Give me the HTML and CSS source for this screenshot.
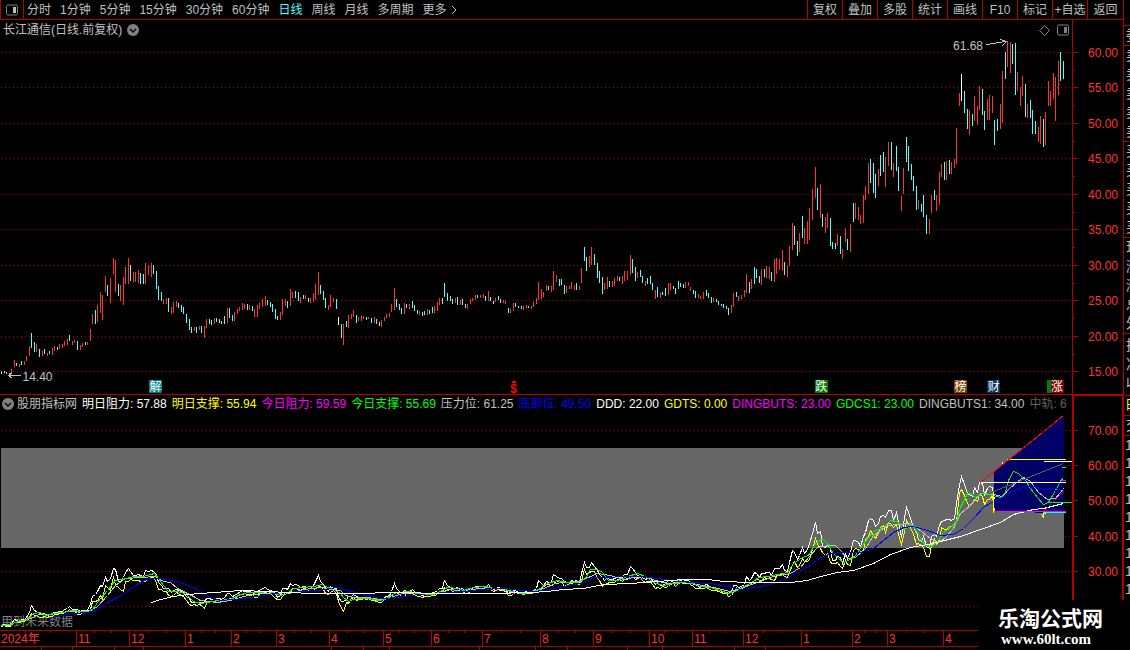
FILE: index.html
```
<!DOCTYPE html>
<html lang="zh-CN">

<head>
    <meta charset="UTF-8" />
    <title>长江通信 日线</title>
    <link rel="stylesheet" href="styles.css">
</head>

<body>
    <div class="terminal">
        <div class="main">
            <header class="toolbar">
                <button class="layout-btn" aria-label="布局">
                    <svg width="12" height="12" viewBox="0 0 12 12">
                        <rect x="0.5" y="1" width="11" height="10" rx="1.5" fill="none" stroke="#808080" />
                        <rect x="7" y="3" width="3" height="6" fill="#c0c0c0" />
                    </svg>
                </button>
                <nav class="periods">
                    <button>分时</button>
                    <button>1分钟</button>
                    <button>5分钟</button>
                    <button>15分钟</button>
                    <button>30分钟</button>
                    <button>60分钟</button>
                    <button class="active">日线</button>
                    <button>周线</button>
                    <button>月线</button>
                    <button>多周期</button>
                    <button class="more">更多
                        <svg width="6" height="10" viewBox="0 0 6 10">
                            <path d="M1 1l4 4-4 4" fill="none" stroke="#c0c0c0" />
                        </svg>
                    </button>
                </nav>
                <div class="tools">
                    <button>复权</button>
                    <button>叠加</button>
                    <button>多股</button>
                    <button>统计</button>
                    <button>画线</button>
                    <button>F10</button>
                    <button>标记</button>
                    <button>+自选</button>
                    <button>返回</button>
                </div>
            </header>

            <!-- Daily price -->
            <section class="panel price">
                <div class="panel-title">
                    <span>长江通信(日线.前复权)</span>
                    <svg class="drop" width="12" height="12" viewBox="0 0 12 12">
                        <circle cx="6" cy="6" r="6" fill="#808080" />
                        <path d="M3 5l3 3 3-3" fill="none" stroke="#000" stroke-width="1.4" />
                    </svg>
                    <div class="corner">
                        <svg width="11" height="11" viewBox="0 0 11 11">
                            <path d="M5.5 0.5l5 5-5 5-5-5z" fill="none" stroke="#808080" />
                        </svg>
                        <svg width="12" height="12" viewBox="0 0 12 12">
                            <rect x="0.5" y="1" width="11" height="10" rx="1.5" fill="none" stroke="#808080" />
                            <rect x="7" y="3" width="3" height="6" fill="#808080" />
                        </svg>
                    </div>
                </div>
                <div class="plot">
                    <svg viewBox="0 38 1072 356" preserveAspectRatio="none" shape-rendering="crispEdges">
                        <g transform="translate(.5 .5)">
                            <g id="priceGrid" class="grid"></g>
                            <path id="upBars" class="up" />
                            <path id="downBars" class="down" />
                            <path id="flatBars" class="flat" />
                            <path class="pointer" d="M986 44L1005 41M1000 39L1006 41L1001 46M8 375H20M12 372L8 375L12 378" />
                        </g>
                    </svg>
                    <span class="tag high">61.68</span>
                    <span class="tag low">14.40</span>
                    <span class="event jie">解</span>
                    <span class="event dividend">$</span>
                    <span class="event die">跌</span>
                    <span class="event bang">榜</span>
                    <span class="event cai">财</span>
                    <span class="event zhang-back"></span>
                    <span class="event zhang">涨</span>
                </div>
                <svg class="axis" id="priceAxis" width="50" height="374" viewBox="0 20 50 374"></svg>
            </section>

            <!-- Indicator -->
            <section class="panel indicator">
                <div class="panel-title values">
                    <svg class="drop" width="12" height="12" viewBox="0 0 12 12">
                        <circle cx="6" cy="6" r="6" fill="#808080" />
                        <path d="M3 5l3 3 3-3" fill="none" stroke="#000" stroke-width="1.4" />
                    </svg>
                    <span>股朋指标网</span>
                    <span class="c-white">明日阻力: 57.88</span>
                    <span class="c-yellow">明日支撑: 55.94</span>
                    <span class="c-magenta">今日阻力: 59.59</span>
                    <span class="c-green">今日支撑: 55.69</span>
                    <span>压力位: 61.25</span>
                    <span class="c-blue">底部位: 49.50</span>
                    <span class="c-white">DDD: 22.00</span>
                    <span class="c-yellow">GDTS: 0.00</span>
                    <span class="c-magenta">DINGBUTS: 23.00</span>
                    <span class="c-green">GDCS1: 23.00</span>
                    <span>DINGBUTS1: 34.00</span>
                    <span class="c-dim">中轨: 6</span>
                </div>
                <div class="plot">
                    <span class="notice">用到未来数据</span>
                    <svg viewBox="0 413 1072 217" preserveAspectRatio="none" shape-rendering="crispEdges">
                        <g transform="translate(.5 .5)">
                            <g id="indGrid" class="grid"></g>
                            <rect x="0.5" y="447.5" width="1063" height="100" fill="#666" />
                            <path d="M993.5 470.5L1063.5 414.5V511H993.5z" fill="#000066" />
                            <g class="lines">
                                <polyline id="support" class="s-yellow" />
                                <polyline id="resistance" class="s-white" />
                                <polyline class="s-gray" points="3,625 20,621 33,617 38,614 50,614 67,611 87,612 97,606 107,595 115,585 125,578 140,577 155,576 163,581 170,582 177,588 185,592 193,596 200,600 217,602 230,600 243,596 260,593 277,593 283,594 293,592 303,589 320,587 333,589 340,590 345,595 353,597 367,597 380,599 390,597 402,593 413,592 430,594 440,592 450,589 463,591 473,589 487,587 503,589 517,592 530,592 543,588 555,583 563,582 578,581 588,577 597,573 610,575 623,579 633,577 645,576 655,580 667,583 683,582 697,584 713,587 730,591 740,588 757,582 773,576 790,573 800,567 808,557 817,547 828,545 835,545 840,550 847,558 855,557 865,548 873,535 887,525 898,524 910,523 917,528 930,538 938,542 945,537 953,528 960,513 970,505 980,493 993,494 1002,496 1008,489 1017,481 1023,477 1030,481 1038,492 1047,499 1055,498 1060,492 1063,488" />
                                <polyline class="s-green" points="1,625 10,624 20,620 27,619 33,613 40,612 45,615 53,613 63,612 72,610 80,611 87,611 92,609 100,598 107,590 115,580 122,579 130,577 133,576 143,576 150,574 154,573 158,578 163,585 168,591 175,591 182,592 187,595 193,601 200,603 207,602 217,600 230,599 238,595 247,592 260,592 267,591 272,592 280,595 287,593 293,588 303,587 313,586 322,584 327,587 333,588 335,590 340,593 343,597 348,601 353,599 360,598 370,598 378,600 385,599 390,595 397,592 410,591 420,594 433,594 438,592 447,587 457,588 463,590 473,587 485,586 493,588 503,588 510,591 522,593 530,592 538,589 547,583 557,580 567,582 578,582 585,578 590,569 597,569 602,572 608,580 617,580 627,576 637,573 645,576 653,582 663,585 673,583 685,582 693,583 700,586 710,587 720,590 728,593 737,590 745,585 750,583 758,577 767,576 777,574 787,572 793,563 802,557 808,555 815,543 822,538 827,543 832,552 838,558 843,562 850,559 855,555 862,545 868,537 873,531 883,527 890,520 897,521 903,529 912,525 917,532 923,543 930,547 938,540 943,532 950,527 955,523 960,507 967,493 970,493 975,497 982,493 993,495 1000,497 1005,492 1008,480 1013,471 1018,473 1025,480 1030,488 1037,497 1043,504 1048,502 1055,490 1061,479 1063,478" />
                                <polyline class="s-blue" points="49,618 60,615 73,613 87,612 97,609 107,602 117,597 127,591 138,583 148,578 160,578 172,580 183,583 195,588 207,596 220,600 233,599 250,597 267,594 283,592 300,591 317,590 330,588 338,587 347,590 360,593 373,597 383,598 397,597 410,595 430,593 447,592 463,591 480,589 503,588 520,590 533,591 550,589 563,586 580,583 593,577 607,577 623,576 643,576 657,578 670,580 690,582 710,583 723,585 737,588 740,589 760,586 777,582 787,578 795,572 807,567 820,557 830,553 843,552 860,552 873,548 883,540 893,532 903,527 913,526 927,530 940,535 953,534 963,528 973,518 983,507 993,501 1003,497 1013,490 1023,487 1033,486 1043,489 1053,488 1063,489" />
                                <polyline class="s-white" points="151,602 160,599 173,596 187,594 200,593 227,591 240,590 267,591 287,592 313,593 340,593 410,592 430,593 487,593 530,592 547,591 563,589 583,588 603,584 630,583 657,581 683,579 707,579 723,581 750,582 790,582 807,580 820,576 837,572 853,570 873,563 890,554 910,547 927,544 940,541 960,536 980,529 1000,522 1013,514 1033,509 1043,508 1063,503" />
                                <!-- levels over the last weeks -->
                                <path class="s-dim" d="M993 491L1063 463" />
                                <path class="s-white" d="M979 482H1065M1043 461H1072M1002 461V463" />
                                <path class="s-yellow" d="M1006 459H1065M993 492V512M1041 514L1043 517V513L1045 513" />
                                <path class="s-green" d="M1061 467H1065M1048 502H1072" />
                                <path class="s-magenta" d="M1061 480H1065M993 511H1065" />
                                <path class="s-navy" d="M1034 512H1042" />
                                <path class="s-cyan" d="M1042 512H1065" />
                                <path class="s-red" d="M980 482L1063 415" />
                                <path class="s-red dashed" d="M1043 511L1063 491" />
                            </g>
                        </g>
                    </svg>
                </div>
                <svg class="axis" id="indAxis" width="48" height="234" viewBox="1 396 48 234"></svg>
            </section>

            <div class="dates">
                <span>2024年</span>
                <span>11</span>
                <span>12</span>
                <span>1</span>
                <span>2</span>
                <span>3</span>
                <span>4</span>
                <span>5</span>
                <span>6</span>
                <span>7</span>
                <span>8</span>
                <span>9</span>
                <span>10</span>
                <span>11</span>
                <span>12</span>
                <span>1</span>
                <span>2</span>
                <span>3</span>
                <span>4</span>
            </div>
            <footer class="tabs">
                <i></i><i></i><i></i><i></i><i></i><i></i><i></i><i></i><i></i><i></i><i></i><i></i><i></i><i></i><i></i>
            </footer>
        </div>

        <aside class="quote">
            <div class="group head"></div>
            <div class="group"><p>委比</p></div>
            <div class="group"><p>卖五</p><p>卖四</p><p>卖三</p><p>卖二</p><p>卖一</p></div>
            <div class="group"><p>买一</p><p>买二</p><p>买三</p><p>买四</p><p>买五</p></div>
            <div class="group"><p>现价</p><p>涨跌</p><p>涨幅</p><p>总量</p><p>外盘</p></div>
            <div class="group last"><p>换手</p><p>净资</p><p>收益</p></div>
            <div class="group c-yellow"><p>时间</p></div>
            <div class="group"><p>交易</p></div>
            <div class="ticks"><p>14:56</p><p>14:56</p><p>14:56</p><p>14:56</p><p>14:56</p><p>14:56</p><p>14:57</p><p>15:00</p><p>15:00</p></div>
        </aside>

        <div class="sitemark">
            <strong>乐淘公式网</strong>
            <a href="#">www.60lt.com</a>
        </div>
    </div>

    <script src="chart.js"></script>
</body>

</html>
```
FILE: styles.css
```
* {
    box-sizing: border-box;
}

body {
    margin: 0;
    background-color: #000;
    color: #c0c0c0;
    font-family: "Liberation Sans", "Noto Sans CJK SC", sans-serif;
    font-size: 12px;
    line-height: 18px;
}

button {
    background: none;
    border: 0;
    padding: 0;
    color: inherit;
    font: inherit;
    white-space: nowrap;
    cursor: pointer;
}

p {
    margin: 0;
}

.terminal {
    position: relative;
    display: flex;
}

.main {
    flex: 1;
    min-width: 0;
}

/* Toolbar */
.toolbar {
    display: flex;
    height: 20px;
    border-bottom: 1px solid #b00000;
}

.layout-btn {
    display: flex;
    align-items: center;
    justify-content: center;
    width: 24px;
    border-left: 1px solid #b00000;
    border-right: 1px solid #b00000;
}

.periods {
    display: flex;
    gap: 9px;
    padding-left: 3px;
}

.periods .active {
    color: #54ffff;
}

.more {
    display: flex;
    align-items: center;
    gap: 4px;
}

.tools {
    display: flex;
    margin-left: auto;
}

.tools button {
    width: 35px;
    border-left: 1px solid #b00000;
}

.tools button:last-child {
    width: 36px;
}

/* Chart panels */
.panel {
    display: grid;
    grid-template-columns: minmax(0, 1fr) auto;
    grid-template-rows: 18px auto;
}

.price {
    border-bottom: 1px solid #b00000;
}

.panel-title {
    display: flex;
    align-items: center;
    gap: 5px;
    padding-left: 3px;
    white-space: nowrap;
    overflow: hidden;
}

.price .panel-title {
    padding-top: 2px;
    line-height: 16px;
}

.panel-title svg {
    flex: none;
}

.values {
    padding-left: 2px;
}

.values .drop {
    margin-right: -2px;
}

.corner {
    display: flex;
    align-items: center;
    gap: 7px;
    margin-left: auto;
    padding-right: 3px;
}

.plot {
    position: relative;
    grid-column: 1;
}

.plot svg {
    display: block;
    position: relative;
    width: 100%;
}

.price .plot svg {
    height: 356px;
}

.indicator .plot svg {
    height: 217px;
}

.axis {
    display: block;
    box-sizing: content-box;
    grid-column: 2;
    grid-row: 1 / 3;
    border-left: 1px solid #b00000;
}

.indicator .axis {
    border-left-width: 2px;
    border-top: 1px solid #b00000;
    border-right: 1px solid #b00000;
}

.axis text {
    fill: #ff3232;
    text-anchor: end;
}

.axis path {
    stroke: #b00000;
}

.grid line {
    stroke: #b00000;
    stroke-dasharray: 1 3;
}

.up {
    stroke: #ff3232;
}

.down {
    stroke: #54ffff;
}

.flat {
    stroke: #fff;
}

.pointer {
    fill: none;
    stroke: #c0c0c0;
}

.lines {
    fill: none;
    stroke-width: 1;
}

.s-white { stroke: #fff; }
.s-yellow { stroke: #ff0; }
.s-gray { stroke: #c0c0c0; }
.s-green { stroke: #0f0; }
.s-blue { stroke: #00f; }
.s-dim { stroke: #606060; }
.s-magenta { stroke: #f0f; }
.s-navy { stroke: #000080; }
.s-cyan { stroke: #0ff; }
.s-red { stroke: #f00; }

.dashed {
    stroke-dasharray: 3 1;
}

.c-white { color: #fff; }
.c-yellow { color: #ff0; }
.c-magenta { color: #f0f; }
.c-green { color: #0f0; }
.c-blue { color: #00f; }
.c-dim { color: #606060; }

.notice {
    position: absolute;
    left: 1px;
    bottom: -1px;
    color: #808080;
}

/* Price tags and event marks pinned on the chart */
.tag,
.event {
    position: absolute;
}

.high {
    left: 88.9%;
    top: -1px;
}

.low {
    left: 2.1%;
    bottom: 8px;
}

.event {
    bottom: 1px;
    width: 13px;
    height: 13px;
    line-height: 14px;
    text-align: center;
    color: #fff;
}

.jie {
    left: 13.9%;
    background-color: #008080;
}

.dividend {
    left: 47.3%;
    bottom: -1px;
    color: #f00;
    font-weight: bold;
}

.dividend::before {
    content: "";
    position: absolute;
    left: 4px;
    top: -2px;
    border: 3px solid transparent;
    border-top-width: 0;
    border-bottom-color: #f00;
}

.die {
    left: 76%;
    background-color: #008000;
}

.bang {
    left: 89%;
    background-color: #804000;
}

.cai {
    left: 92.1%;
    background-color: #003366;
}

.zhang-back {
    left: 97.7%;
    background-color: #008000;
}

.zhang {
    left: 98%;
    background-color: #800000;
}

/* Month scale */
.dates {
    display: grid;
    grid-template-columns: 76fr 53fr 56fr 46fr 45fr 53fr 54fr 48fr 51fr 58fr 53fr 56fr 43fr 51fr 58fr 51fr 35fr 56fr 180fr;
    height: 17px;
    line-height: 16px;
    border-top: 1px solid #b00000;
    border-bottom: 1px solid #b00000;
    color: #ff3232;
}

.dates span {
    min-width: 0;
    padding-left: 1px;
    border-left: 1px solid #b00000;
    background: linear-gradient(#b00000, #b00000) 33% 0 / 1px 2px no-repeat,
        linear-gradient(#b00000, #b00000) 66% 0 / 1px 2px no-repeat;
}

.dates span:first-child {
    border-left: 0;
}

.tabs {
    display: grid;
    grid-template-columns: 42fr 31fr 42fr 29fr 188fr 32fr 26fr 90fr 56fr 32fr 60fr 35fr 72fr 31fr 357fr;
    height: 3px;
}

.tabs i {
    border-right: 1px solid #b00000;
}

/* Quote column */
.quote {
    flex: 0 0 7px;
    overflow: hidden;
    white-space: nowrap;
    border-left: 1px solid #b00000;
    font-size: 14px;
    line-height: 19px;
}

.group {
    padding-left: 2px;
    border-bottom: 1px solid #b00000;
}

.group.head {
    height: 26px;
}

.group.last {
    padding-top: 2px;
    padding-bottom: 2px;
}

.ticks {
    padding-left: 1px;
    line-height: 18px;
}

.sitemark {
    position: absolute;
    right: 0;
    bottom: 0;
    width: 152px;
    height: 50px;
    padding: 5px 0 0 20px;
    background-color: #000;
    color: #fff;
}

.sitemark strong {
    display: block;
    font-family: "Noto Sans CJK SC", sans-serif;
    font-size: 21px;
    line-height: 24px;
}

.sitemark a {
    display: block;
    padding-left: 3px;
    color: #fff;
    font: bold 15px/20px "Liberation Serif", serif;
    text-decoration: none;
}
```
FILE: chart.js
```
// one bar per day: direction (u up, d down, n flat), x, high, low
const days = `
d1,370,373 d4,370,372 d6,371,373 d9,372,374 u11,368,372 u14,359,366 d16,362,365 u19,363,366 d21,360,364 u24,360,364
u26,355,360 u29,345,355 d31,332,347 d34,341,351 u36,343,351 d39,348,356 u42,350,355 d44,348,353 u47,352,355 d49,350,353
u52,347,354 u54,345,350 d57,346,349 u59,343,348 u62,343,347 u64,340,345 u67,338,344 d69,334,340 u72,340,344 u74,339,342
d77,340,349 u80,344,349 u82,342,346 d85,341,344 u87,341,344 u90,328,340 u92,313,323 d95,309,323 u97,304,321 u100,291,312
u102,294,319 u105,275,291 d107,284,295 u110,277,302 u113,257,273 u115,259,291 d118,283,295 u120,284,300 u123,276,304
u125,266,283 u128,257,283 d130,264,280 u133,271,281 u135,271,281 u138,269,282 d140,272,283 d143,273,283 u145,262,283
u148,264,274 u151,262,276 d153,264,273 d156,270,288 d158,285,299 d161,291,300 u163,298,303 u166,297,303 d168,297,311
u171,306,313 u173,301,312 u176,300,306 d178,302,307 d181,304,311 d183,306,313 d186,313,322 d189,318,329 d191,326,332
u194,326,330 d196,326,332 u199,325,329 d201,325,332 u204,325,337 u206,318,327 d209,318,323 d211,319,324 u214,317,323
d216,317,321 d219,318,322 d221,320,323 d224,315,323 u227,307,322 d229,307,317 d232,314,320 u234,311,320 u237,308,313
u239,306,310 u242,302,309 u244,303,308 d247,303,309 u249,304,309 d252,305,310 u254,308,316 u257,304,316 u259,302,308
u262,298,306 u265,295,305 d267,299,304 d270,301,306 d272,303,311 d275,308,318 d277,315,319 u280,311,319 u282,298,314
u285,298,305 d287,300,307 u290,288,305 u292,291,297 d295,290,297 d298,291,300 u300,296,302 d303,294,298 u305,294,298
d308,297,301 u310,297,302 u313,292,301 u315,283,299 u318,271,294 d320,284,293 d323,290,299 d325,297,307 u328,304,309
u330,294,306 u333,297,301 d336,298,308 n338,316,324 d341,323,337 u343,323,344 d346,320,326 u348,314,327 u351,313,318
u353,309,316 d356,314,322 u358,316,320 u361,315,320 u363,315,318 d366,316,319 u368,316,318 d371,317,322 u374,316,322
d376,318,323 d379,321,325 u381,319,326 u384,316,320 u386,313,317 u389,312,316 u391,303,311 u394,287,309 d396,298,306
d399,303,309 d401,307,313 u404,302,313 d406,303,307 u409,303,308 d412,300,307 d414,304,310 d417,309,313 u419,310,314
d422,311,315 d424,310,314 u427,308,314 d429,309,313 d432,306,312 u434,305,312 u437,301,310 u439,297,304 d442,297,303
d444,282,296 d447,292,300 d450,295,300 d452,298,303 u455,297,302 d457,296,304 u460,299,304 d462,298,304 d465,303,307
u467,303,308 u470,298,303 u472,297,300 u475,294,299 d477,294,297 u480,294,297 u483,293,297 d485,295,300 u488,290,300
d490,296,300 d493,300,303 u495,297,301 d498,295,299 d500,298,302 u503,299,302 u505,300,303 d508,307,312 u510,308,312
u513,302,310 d515,302,306 d518,305,307 d521,305,308 u523,305,309 u526,304,307 d528,305,307 u531,305,308 u533,301,306
u536,297,303 u538,281,299 u541,288,298 u543,291,296 u546,284,290 d548,285,289 u551,285,291 u553,270,289 u556,274,281
d559,278,285 d561,278,284 d564,284,293 u566,285,292 u569,285,288 u571,281,288 u574,284,289 d576,282,289 u579,285,289
u581,267,282 d584,246,260 d586,256,270 u589,255,266 u591,246,264 d594,253,264 d597,262,277 d599,270,282 d602,276,293
u604,282,289 u607,276,288 d609,280,286 u612,280,286 u614,277,285 u617,275,280 d619,276,280 u622,275,283 u624,270,280
u627,270,279 u630,254,274 d632,258,272 d635,266,280 u637,271,277 d640,269,276 d642,275,282 u645,280,285 d647,277,283
d650,275,283 d652,282,289 u655,289,298 d657,286,296 u660,291,297 d662,291,294 d665,287,295 u668,282,294 u670,282,289
d673,285,288 d675,287,293 d678,280,288 d680,282,286 d683,283,287 u685,281,287 u688,281,285 u690,286,290 d693,289,293
d695,290,297 u698,293,297 u700,295,298 u703,291,298 d706,289,295 d708,292,297 d711,296,302 u713,297,301 d716,298,301
d718,300,304 d721,303,305 d723,303,307 d726,305,308 d728,307,314 u731,304,312 u733,292,306 d736,291,296 u738,295,300
u741,294,298 u744,289,296 u746,273,292 d749,281,292 u751,278,288 d754,266,283 d756,268,277 d759,275,282 u761,268,284
d764,268,276 u766,265,277 u769,266,278 d771,271,280 u774,258,281 u776,257,273 u779,258,269 u782,249,270 d784,261,274
u787,264,276 u789,245,265 u792,222,249 d794,225,244 d797,240,255 u799,232,251 d802,215,237 u804,227,243 u807,220,243
u809,207,239 u812,188,219 u815,166,197 d817,187,209 u820,183,217 d822,213,226 u825,216,232 u827,212,227 d830,217,245
d832,241,248 d835,242,248 u837,233,245 d840,235,253 u842,248,258 u845,227,241 d847,238,249 u850,223,251 d853,202,221
u855,202,218 u858,206,219 u860,214,223 u863,194,222 u865,185,199 u868,162,193 d870,158,182 d873,162,192 d875,173,197
u878,168,185 d880,154,175 d883,151,171 u885,156,186 u888,141,165 d891,141,169 u893,162,176 d896,145,170 d898,166,190
u901,195,210 u903,167,193 d906,136,161 d908,145,170 d911,163,179 d913,175,190 d916,185,209 u918,199,208 d921,203,211
d923,194,216 d926,214,233 u929,218,233 u931,194,212 d934,189,199 u936,194,210 u939,171,204 u941,163,176 d944,161,179
u946,160,179 d949,159,173 u951,161,173 u954,158,167 u956,127,163 u959,92,105 n961,73,100 d964,90,112 d967,108,128
u969,109,134 d972,113,125 u974,95,120 u977,105,124 u979,85,109 d982,88,114 d984,110,129 u987,98,119 u989,94,119
u992,95,112 d994,119,144 d997,118,130 u1000,103,128 u1002,70,122 d1005,51,78 u1007,40,66 u1010,41,72 d1012,43,63
d1015,42,94 u1017,71,90 u1020,86,105 u1022,75,95 d1025,83,116 u1027,103,117 d1030,99,117 d1032,109,133 d1035,120,133
u1038,126,141 u1040,115,143 d1043,118,146 u1045,111,144 u1048,80,105 u1050,90,105 u1053,72,98 u1055,76,120 u1058,60,94
d1060,51,80 d1063,60,78
`.trim().split(/\s+/).map((item) => {
    const [x, high, low] = item.slice(1).split(",").map(Number);
    return { dir: item[0], x, high, low };
});

const barPath = (dir) => days
    .filter((d) => d.dir === dir)
    .map((d) => `M${d.x} ${d.high}V${d.low}`)
    .join("");

document.getElementById("upBars").setAttribute("d", barPath("u"));
document.getElementById("downBars").setAttribute("d", barPath("d"));
document.getElementById("flatBars").setAttribute("d", barPath("n"));

// the lower panel has half the price scale
const toIndicator = (y) => Math.round(465 + (y - 52) / 2);
const past = days.filter((d) => d.x <= 994);
document.getElementById("resistance").setAttribute("points", past.map((d) => `${d.x},${toIndicator(d.high)}`).join(" "));
document.getElementById("support").setAttribute("points", past.map((d) => `${d.x},${toIndicator(d.low)}`).join(" "));

function drawScale(gridId, axisId, levels, minor) {
    document.getElementById(gridId).innerHTML = levels
        .map(([y]) => `<line x1="0.5" x2="1072" y1="${y}" y2="${y}" />`)
        .join("");

    const ticks = levels.map(([y]) => `M0 ${y}.5H5`).join("") + minor.map((y) => `M0 ${y}.5H2`).join("");
    const labels = levels
        .filter(([, label]) => label)
        .map(([y, label]) => `<text x="45" y="${y + 5}">${label}</text>`)
        .join("");
    document.getElementById(axisId).innerHTML = `<path d="${ticks}" />${labels}`;
}

drawScale("priceGrid", "priceAxis", [
    [52, "60.00"], [87, "55.00"], [123, "50.00"], [158, "45.00"], [194, "40.00"],
    [229, "35.00"], [265, "30.00"], [300, "25.00"], [336, "20.00"], [371, "15.00"],
], [70, 105, 141, 176, 212, 247, 283, 318, 354]);

drawScale("indGrid", "indAxis", [
    [430, "70.00"], [465, "60.00"], [500, "50.00"], [536, "40.00"], [571, "30.00"], [606, ""],
], [448, 483, 518, 554, 589]);
```
